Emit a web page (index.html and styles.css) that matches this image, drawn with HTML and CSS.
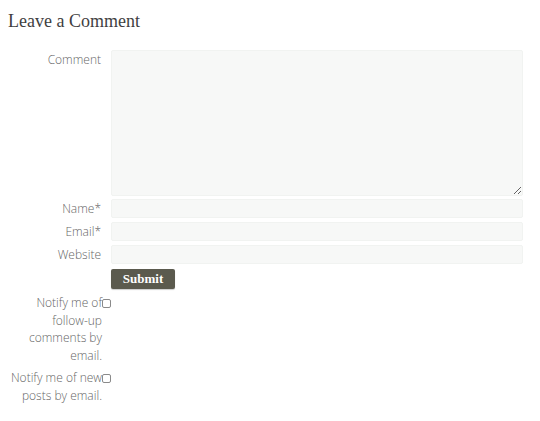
FILE: index.html
```html
<!DOCTYPE html>
<html lang="en">
<head>
    <meta charset="UTF-8">
    <meta name="viewport" content="width=device-width, initial-scale=1.0">
    <title>Leave a Comment</title>
    <link rel="stylesheet" href="styles.css">
</head>
<body>
    <div class="comment-respond">
        <h3 class="reply-title">Leave a Comment</h3>
        <form class="comment-form">
            <div class="form-row row-comment">
                <label for="comment">Comment</label>
                <textarea id="comment" name="comment"></textarea>
            </div>
            <div class="form-row">
                <label for="author">Name*</label>
                <input type="text" id="author" name="author">
            </div>
            <div class="form-row">
                <label for="email">Email*</label>
                <input type="email" id="email" name="email">
            </div>
            <div class="form-row">
                <label for="url">Website</label>
                <input type="text" id="url" name="url">
            </div>
            <div class="form-row row-submit">
                <span class="spacer"></span>
                <button type="submit">Submit</button>
            </div>
            <div class="check-row">
                <label for="subscribe_comments">Notify me of follow-up comments by email.</label>
                <input type="checkbox" id="subscribe_comments">
            </div>
            <div class="check-row">
                <label for="subscribe_blog">Notify me of new posts by email.</label>
                <input type="checkbox" id="subscribe_blog">
            </div>
        </form>
    </div>
</body>
</html>
```

FILE: styles.css
```css
* {
    margin: 0;
    padding: 0;
    box-sizing: border-box;
}

body {
    font-family: 'Open Sans', 'Liberation Sans', sans-serif;
    background: #ffffff;
    padding: 9px 8px;
}

.reply-title {
    font-family: 'Liberation Serif', 'DejaVu Serif', serif;
    font-size: 18px;
    font-weight: 400;
    color: #3f3f3f;
    line-height: 24px;
    margin-bottom: 17px;
}

.comment-form {
    width: 515px;
}

.form-row {
    display: flex;
    align-items: center;
    margin-bottom: 4px;
}

.form-row label,
.form-row .spacer {
    width: 93px;
    flex-shrink: 0;
    margin-right: 10px;
    text-align: right;
    font-size: 12px;
    font-weight: 300;
    color: #666666;
}

.row-comment {
    align-items: flex-start;
    margin-bottom: 3px;
}

.row-comment label {
    padding-top: 1px;
}

textarea,
input[type="text"],
input[type="email"] {
    flex: 1;
    background: #f7f8f7;
    border: 1px solid #f1f3f1;
    border-radius: 2px;
    font-size: 12px;
}

textarea {
    height: 146px;
    resize: vertical;
}

input[type="text"],
input[type="email"] {
    height: 19px;
}

.row-submit {
    margin-top: 5px;
    margin-bottom: 5px;
}

button {
    background: #5b5a4e;
    color: #ffffff;
    border: none;
    border-radius: 2px;
    width: 64px;
    height: 20px;
    font-family: 'Liberation Serif', 'DejaVu Serif', serif;
    font-size: 13px;
    font-weight: 700;
    box-shadow: 0 1px 1px rgba(0, 0, 0, 0.2);
}

.check-row {
    display: flex;
    align-items: flex-start;
    margin-bottom: 5px;
}

.check-row label {
    width: 94px;
    text-align: right;
    font-size: 12px;
    font-weight: 300;
    line-height: 17.5px;
    color: #666666;
}

.check-row input {
    appearance: none;
    width: 9px;
    height: 9px;
    margin-top: 5px;
    border: 1px solid #8a8a8a;
    border-radius: 2px;
    background: #ffffff;
}
```
